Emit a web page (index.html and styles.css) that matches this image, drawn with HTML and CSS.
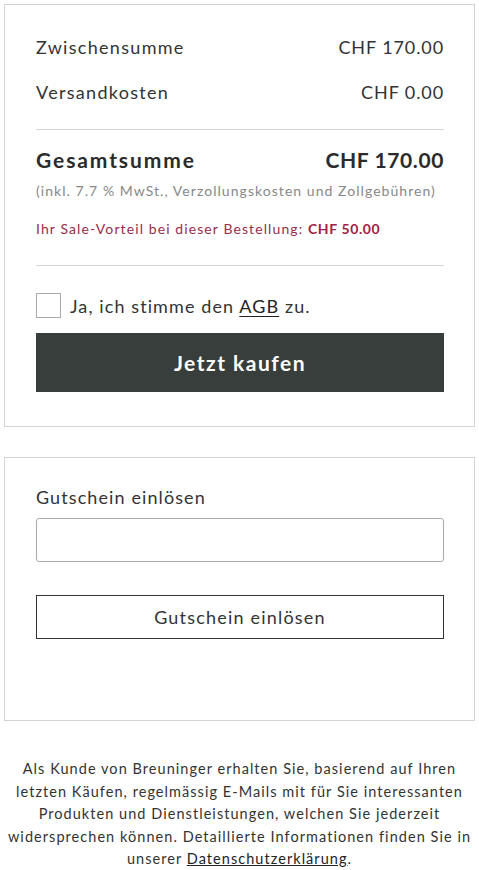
FILE: index.html
```html
<!DOCTYPE html>
<html lang="de">
<head>
<meta charset="utf-8">
<link rel="stylesheet" href="styles.css">
</head>
<body>
<section class="card summary">
  <div class="row first"><span class="label">Zwischensumme</span><span>CHF 170.00</span></div>
  <div class="row second"><span class="label">Versandkosten</span><span>CHF 0.00</span></div>
  <hr class="divider">
  <div class="row total"><span class="label">Gesamtsumme</span><span>CHF 170.00</span></div>
  <p class="note">(inkl. 7.7 % MwSt., Verzollungskosten und Zollgebühren)</p>
  <p class="sale">Ihr Sale-Vorteil bei dieser Bestellung: <strong>CHF 50.00</strong></p>
  <hr class="divider second-divider">
  <label class="agree"><span class="checkbox"></span><span>Ja, ich stimme den <a href="#">AGB</a> zu.</span></label>
  <button class="buy">Jetzt kaufen</button>
</section>
<section class="card voucher">
  <label class="voucher-label" for="code">Gutschein einlösen</label>
  <input class="voucher-input" id="code" type="text">
  <button class="voucher-btn">Gutschein einlösen</button>
</section>
<p class="legal">Als Kunde von Breuninger erhalten Sie, basierend auf Ihren letzten Käufen, regelmässig E-Mails mit für Sie interessanten Produkten und Dienstleistungen, welchen Sie jederzeit widersprechen können. Detaillierte Informationen finden Sie in unserer <a href="#">Datenschutzerklärung</a>.</p>
</body>
</html>
```
FILE: styles.css
```css
* { box-sizing: border-box; }
html, body { margin: 0; background: #fff; }
body {
  padding: 4px 4px 0 4px;
  font-family: "Lato", "Noto Sans", sans-serif;
  color: #333;
}
.card {
  border: 1px solid #d4d4d4;
  padding: 0 30px 0 31px;
}
.summary { padding-top: 30px; padding-bottom: 34px; }
.row {
  display: flex;
  justify-content: space-between;
  font-size: 18px;
  letter-spacing: 0.9px;
  line-height: 24px;
  color: #333;
}
.row .label { letter-spacing: 1.3px; }
.second { margin-top: 21px; }
.divider {
  border: 0;
  border-top: 1px solid #d4d4d4;
  margin: 25px 0 0;
}
.total {
  margin-top: 16px;
  font-size: 21px;
  font-weight: 700;
  letter-spacing: 0.6px;
  line-height: 28px;
  color: #2b2b2b;
}
.total .label { letter-spacing: 1.9px; }
.note {
  margin: 7px 0 0;
  font-size: 14px;
  line-height: 20px;
  letter-spacing: 1.05px;
  color: #888;
}
.sale {
  margin: 18px 0 0;
  font-size: 14px;
  line-height: 20px;
  letter-spacing: 1.1px;
  color: #9a2c4c;
}
.sale strong { color: #a3213f; font-weight: 700; letter-spacing: 0.6px; }
.second-divider { margin-top: 26px; }
.agree {
  display: flex;
  align-items: center;
  gap: 9px;
  margin-top: 27px;
  font-size: 18px;
  letter-spacing: 1.1px;
  line-height: 24px;
  color: #333;
}
.checkbox {
  width: 25px;
  height: 25px;
  border: 1px solid #aaa;
  flex: none;
}
.agree a { color: #222; text-decoration: underline; text-underline-offset: 3px; }
.buy {
  display: block;
  width: 100%;
  height: 59px;
  margin-top: 15px;
  border: 0;
  background: #373e3c;
  color: #fff;
  font-family: inherit;
  font-size: 21px;
  font-weight: 700;
  letter-spacing: 1.5px;
}
.voucher { margin-top: 30px; padding-top: 27px; padding-bottom: 81px; }
.voucher-label {
  display: block;
  font-size: 18px;
  line-height: 24px;
  letter-spacing: 1.1px;
  color: #333;
}
.voucher-input {
  display: block;
  width: 100%;
  height: 44px;
  margin-top: 9px;
  border: 1px solid #aaa;
  border-radius: 3px;
  font: inherit;
}
.voucher-btn {
  display: block;
  width: 100%;
  height: 44px;
  margin-top: 33px;
  background: #fff;
  border: 1px solid #333;
  color: #333;
  font-family: inherit;
  font-size: 18px;
  letter-spacing: 1.2px;
}
.legal {
  margin: 37px 0 0;
  padding: 0 2px;
  text-align: center;
  font-size: 14.5px;
  line-height: 22.5px;
  letter-spacing: 1.05px;
  color: #333;
}
.legal a { color: #222; text-decoration: underline; }
```
